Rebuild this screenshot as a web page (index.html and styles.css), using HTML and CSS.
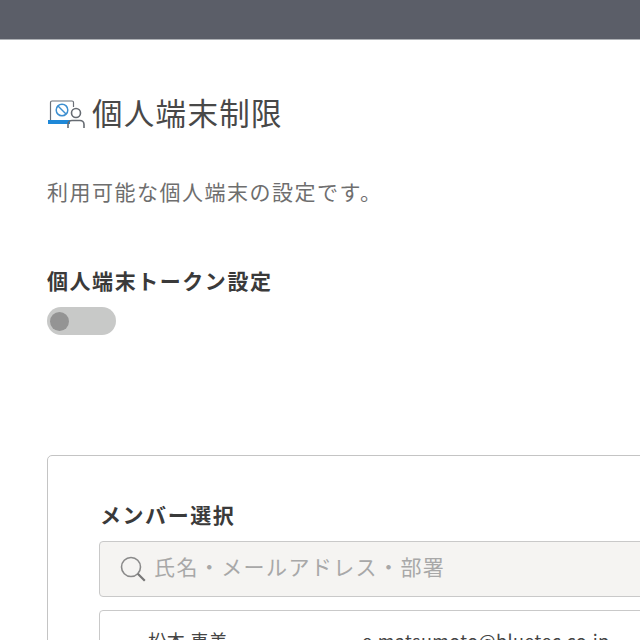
FILE: index.html
```html
<!DOCTYPE html>
<html lang="ja">
<head>
<meta charset="utf-8">
<title>個人端末制限</title>
<link rel="stylesheet" href="styles.css">
</head>
<body>
<header class="topbar"></header>
<main class="page">
  <h1 class="title">
    <svg class="title-icon" width="38" height="32" viewBox="0 0 38 32" fill="none">
      <path d="M3.500 24V6.500a1.500 1.500 0 0 1 1.500-1.500h20a1.500 1.500 0 0 1 1.500 1.500V11" stroke="#6b7078" stroke-width="1.200"/>
      <rect x="1" y="24" width="22" height="4" fill="#1e88d8"/>
      <circle cx="15" cy="14" r="5.800" stroke="#3d8fd0" stroke-width="1.500"/>
      <path d="M11 10l8 8" stroke="#3d8fd0" stroke-width="1.500"/>
      <circle cx="29" cy="17" r="4.500" stroke="#666b72" stroke-width="1.600"/>
      <path d="M21 32v-3.500a4 4 0 0 1 4-4h8a4 4 0 0 1 4 4v3.500" stroke="#666b72" stroke-width="1.600"/>
    </svg>
    <span>個人端末制限</span>
  </h1>
  <p class="desc">利用可能な個人端末の設定です。</p>
  <section class="setting">
    <h2 class="label">個人端末トークン設定</h2>
    <div class="toggle"><span class="knob"></span></div>
  </section>
  <section class="card">
    <h2 class="label card-label">メンバー選択</h2>
    <div class="search">
      <svg class="search-icon" width="26" height="26" viewBox="0 0 26 26" fill="none">
        <circle cx="11" cy="11" r="9.500" stroke="#8a8a8a" stroke-width="1.600"/>
        <path d="M17.800 17.800l7 7" stroke="#777" stroke-width="2.200"/>
      </svg>
      <span class="placeholder">氏名・メールアドレス・部署</span>
    </div>
    <div class="member">
      <span class="name">松本 恵美</span>
      <span class="email">e.matsumoto@bluetec.co.jp</span>
    </div>
  </section>
</main>
</body>
</html>
```
FILE: styles.css
```css
html, body {
  margin: 0;
  height: 640px;
  overflow: hidden;
  background: #fff;
  font-family: "Noto Sans CJK JP", "Noto Sans", sans-serif;
  color: #333;
}
.topbar {
  height: 39px;
  background: #5b5e68;
  border-bottom: 1px solid #aeb1b5;
}
.page {
  padding: 44px 0 0 47px;
  width: 760px;
}
.title {
  display: flex;
  align-items: center;
  gap: 7px;
  margin: 0;
  height: 56px;
  font-size: 30.500px;
  line-height: 56px;
  font-weight: 400;
  letter-spacing: 1.300px;
  color: #484848;
}
.title-icon {
  flex: none;
}
.desc {
  margin: 35px 0 0;
  font-size: 21px;
  line-height: 32px;
  letter-spacing: 1.500px;
  color: #6e6e6e;
}
.setting {
  margin-top: 57px;
}
.label {
  margin: 0;
  font-size: 21px;
  line-height: 32px;
  font-weight: 700;
  letter-spacing: 1.550px;
  color: #3a3a3a;
}
.card-label {
  padding-left: 1px;
}
.toggle {
  display: flex;
  align-items: center;
  width: 69px;
  height: 28px;
  margin-top: 11px;
  padding-left: 3px;
  box-sizing: border-box;
  border-radius: 14px;
  background: #c8c9c8;
}
.knob {
  width: 19px;
  height: 19px;
  border-radius: 50%;
  background: #949494;
}
.card {
  margin-top: 120px;
  padding: 42px 0 0 51px;
  height: 300px;
  box-sizing: border-box;
  border: 1px solid #c4c4c4;
  border-radius: 5px;
}
.search {
  display: flex;
  align-items: center;
  gap: 8px;
  height: 56px;
  margin-top: 11px;
  padding-left: 20px;
  box-sizing: border-box;
  border: 1px solid #c9c9c9;
  border-radius: 4px;
  background: #f5f4f2;
}
.placeholder {
  padding-bottom: 7px;
  font-size: 21px;
  line-height: 28px;
  letter-spacing: 1.400px;
  color: #a8a8a8;
}
.search-icon {
  flex: none;
}
.member {
  display: flex;
  height: 120px;
  margin-top: 13px;
  padding: 15px 0 0 48px;
  box-sizing: border-box;
  border: 1px solid #c9c9c9;
  border-radius: 4px;
  font-size: 18px;
  line-height: 28px;
  color: #444;
}
.name {
  width: 214px;
  letter-spacing: 0.800px;
}
.email {
  letter-spacing: 0.400px;
}
```
